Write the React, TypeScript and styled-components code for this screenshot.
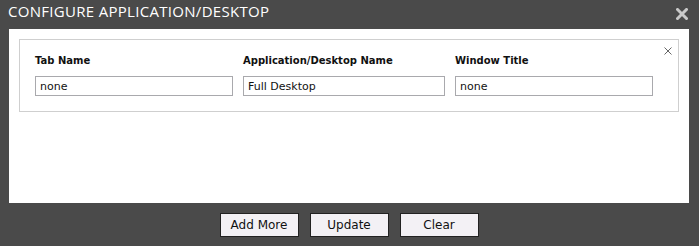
import styled, { createGlobalStyle } from 'styled-components';

const GlobalStyle = createGlobalStyle`
  html, body {
    margin: 0;
    padding: 0;
    background: #4a4a4a;
  }
`;

const fields = [
  { label: 'Tab Name', value: 'none', width: 198 },
  { label: 'Application/Desktop Name', value: 'Full Desktop', width: 202 },
  { label: 'Window Title', value: 'none', width: 198 },
];

export default function App() {
  return (
    <>
      <GlobalStyle />
      <Dialog>
        <Header>
          <Title>CONFIGURE APPLICATION/DESKTOP</Title>
          <Close>
            <svg width="12" height="12" viewBox="0 0 12 12">
              <path d="M1.5 1.5 L10.5 10.5 M10.5 1.5 L1.5 10.5" stroke="#c9c9c9" strokeWidth="3" strokeLinecap="square" />
            </svg>
          </Close>
        </Header>

        <Body>
          <Fieldset>
            <Remove>
              <svg width="8" height="8" viewBox="0 0 8 8">
                <path d="M0.5 0.5 L7.5 7.5 M7.5 0.5 L0.5 7.5" stroke="#666" strokeWidth="1" />
              </svg>
            </Remove>
            <Row>
              {fields.map(f => (
                <Field key={f.label} width={f.width}>
                  <Label>{f.label}</Label>
                  <Input defaultValue={f.value} />
                </Field>
              ))}
            </Row>
          </Fieldset>
        </Body>

        <Footer>
          <Button>Add More</Button>
          <Button>Update</Button>
          <Button>Clear</Button>
        </Footer>
      </Dialog>
    </>
  );
}

const Dialog = styled.div`
  width: 699px;
  height: 246px;
  display: flex;
  flex-direction: column;
  background: #4a4a4a;
`;

const Header = styled.div`
  height: 29px;
  display: flex;
  justify-content: space-between;
  align-items: flex-start;
  padding: 0 11px 0 8px;
`;

const Title = styled.div`
  font-family: 'Open Sans', sans-serif;
  font-size: 15px;
  letter-spacing: 0.3px;
  line-height: 23px;
  color: #fff;
`;

const Close = styled.div`
  margin-top: 8px;
  width: 12px;
  height: 12px;
  display: flex;
  cursor: pointer;
`;

const Body = styled.div`
  margin: 0 10px 0 9px;
  height: 174px;
  background: #fff;
  padding: 10px;
  box-sizing: border-box;
`;

const Fieldset = styled.div`
  position: relative;
  border: 1px solid #cfcfcf;
  padding: 15px 0 15px 15px;
`;

const Remove = styled.div`
  position: absolute;
  top: 7px;
  right: 6px;
  width: 8px;
  height: 8px;
  display: flex;
  cursor: pointer;
`;

const Row = styled.div`
  display: flex;
  column-gap: 10px;
`;

const Field = styled.div<{ width: number }>`
  width: ${p => p.width}px;
  display: flex;
  flex-direction: column;
`;

const Label = styled.div`
  font-family: 'DejaVu Sans', sans-serif;
  font-weight: bold;
  font-size: 10px;
  line-height: 12px;
  color: #111;
  margin-bottom: 9px;
`;

const Input = styled.input`
  box-sizing: border-box;
  width: 100%;
  height: 20px;
  border: 1px solid #a9a9ad;
  padding: 0 4px;
  margin: 0;
  font-family: 'DejaVu Sans', sans-serif;
  font-size: 11px;
  color: #111;
  outline: none;
`;

const Footer = styled.div`
  flex: 1;
  display: flex;
  justify-content: center;
  align-items: flex-start;
  gap: 11px;
  padding: 10px 1px 0 0;
`;

const Button = styled.button`
  width: 79px;
  height: 24px;
  box-sizing: border-box;
  background: #f3f1f5;
  border: 1px solid #222;
  border-radius: 0;
  font-family: 'DejaVu Sans', sans-serif;
  font-size: 12px;
  color: #111;
  padding: 0;
  cursor: pointer;
`;
